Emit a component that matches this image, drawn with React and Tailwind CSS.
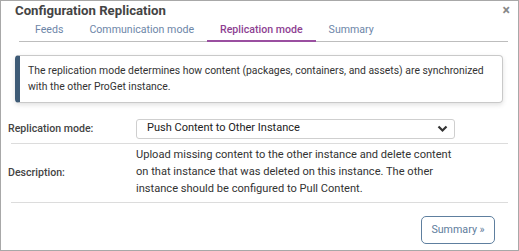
import React from 'react';

const tabs = [
  { label: 'Feeds' },
  { label: 'Communication mode' },
  { label: 'Replication mode', active: true },
  { label: 'Summary' },
];

const App = () => {
  return (
    <div className="relative w-[519px] h-[251px] bg-white border border-[#a8a8a8] font-['Roboto',sans-serif] text-[#333]">
      {/* Title bar */}
      <div className="pl-[14px] pt-[1px] h-[20px] text-[13.2px] font-bold text-[#444] leading-[18px]">
        Configuration Replication
      </div>
      <button className="absolute right-[8px] top-[2px] text-[#888] text-[14px] font-bold leading-none">×</button>

      {/* Tabs */}
      <div className="ml-[18px] mr-[10px] flex pl-[3px] border-b border-[#bdbdbd] text-[10.6px]">
        {tabs.map(tab => (
          <div
            key={tab.label}
            className={
              tab.active
                ? 'px-[13px] h-[21px] leading-[17px] text-[#8e3f92] font-medium border-b-2 border-[#9a4fa0] -mb-[1px]'
                : 'px-[13px] h-[20px] leading-[17px] text-[#6d86a8]'
            }
          >
            {tab.label}
          </div>
        ))}
      </div>

      {/* Info box */}
      <div className="mt-[13px] ml-[14px] mr-[15px] h-[48px] flex items-center rounded-[4px] border border-[#c9c9c9] border-l-[5px] border-l-[#3e5b76] shadow-[0_2px_5px_rgba(0,0,0,0.12)] pl-[8px] pr-[8px] text-[10.4px] leading-[16px] text-[#333]">
        The replication mode determines how content (packages, containers, and assets) are synchronized with the other ProGet instance.
      </div>

      {/* Form */}
      <div className="mt-[11px] ml-[10px] mr-[10px]">
        <div className="flex items-center h-[30px] border-b border-[#dcdcdc]">
          <div className="w-[128px] -ml-[3px] text-[10.6px] font-medium text-[#444]">Replication mode:</div>
          <div className="w-[319px] h-[20px] flex items-center justify-between border border-[#cfcfcf] rounded-[3px] pl-[10px] pr-[6px] text-[11px] text-[#222]">
            <span>Push Content to Other Instance</span>
            <svg width="11" height="8" viewBox="0 0 11 8">
              <path d="M1.5 1.5 L5.5 5.5 L9.5 1.5" fill="none" stroke="#333" strokeWidth="2.2" />
            </svg>
          </div>
        </div>
        <div className="flex items-center h-[59px] border-b border-[#dcdcdc]">
          <div className="w-[128px] -ml-[3px] text-[10.6px] font-medium text-[#444]">Description:</div>
          <div className="w-[330px] pb-[4px] text-[11.1px] leading-[17px] text-[#333]">
            Upload missing content to the other instance and delete content on that instance that was deleted on this instance. The other instance should be configured to Pull Content.
          </div>
        </div>
      </div>

      {/* Footer */}
      <div className="flex justify-end mt-[13px] mr-[23px]">
        <button className="w-[74px] h-[28px] rounded-[5px] border border-[#5e7f9f] text-[#5e7c9c] text-[10.7px]">
          Summary »
        </button>
      </div>
    </div>
  );
};

export default App;
